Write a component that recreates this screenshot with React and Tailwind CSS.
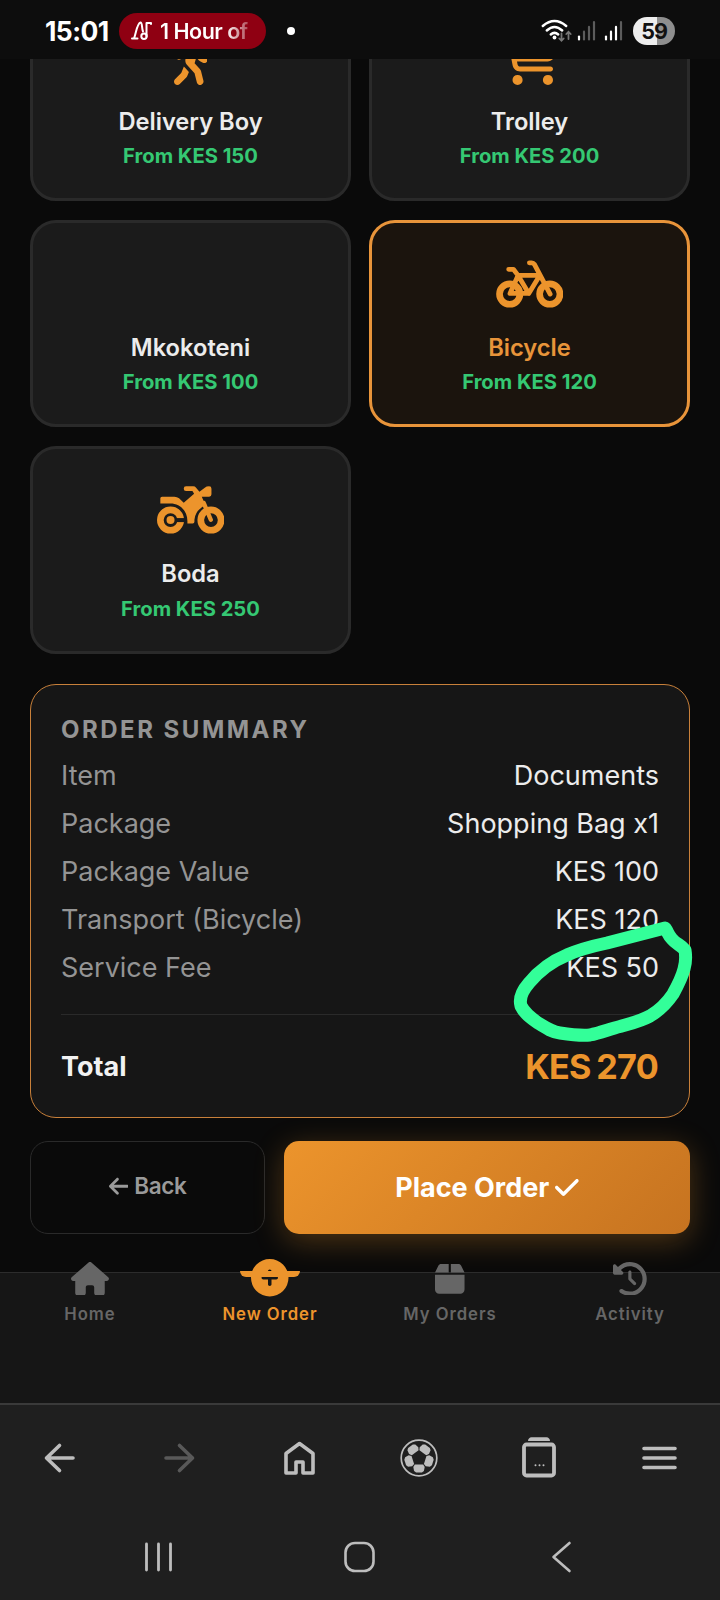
import React from 'react';
import {
    FaArrowLeft,
    FaBox,
    FaCartShopping,
    FaCheck,
    FaCirclePlus,
    FaClockRotateLeft,
    FaHouse,
    FaPersonWalking,
} from 'react-icons/fa6';

const BicycleIcon = ({ className }) => (
    <svg className={className} viewBox="0 0 202 162" fill="none" stroke="currentColor" strokeWidth="14.500" strokeLinecap="round" strokeLinejoin="round">
        <g transform="translate(0 10)">
            <circle cx="41" cy="101" r="30.500" strokeWidth="20" />
            <circle cx="161" cy="101" r="30.500" strokeWidth="20" />
            <path d="M38 27H52L66 45M124 45H66L42 99H98L66 45M98 99 128 50M100 7.500H107Q112 7.500 115 12L162 101" />
        </g>
    </svg>
);

const MotorcycleIcon = ({ className }) => (
    <svg className={className} viewBox="0 0 202 162" fill="none">
        <g transform="translate(0 10)">
            <circle cx="40.500" cy="101" r="30.500" stroke="currentColor" strokeWidth="20" />
            <path d="M50 101H86" stroke="#1b1b1b" strokeWidth="12" />
            <circle cx="40.500" cy="101" r="12" fill="currentColor" />
            <circle cx="161.500" cy="101" r="30.500" stroke="currentColor" strokeWidth="20" />
            <path d="M140 50 161 100" stroke="currentColor" strokeWidth="13" strokeLinecap="round" />
            <path
                fill="currentColor"
                d="M10 36Q10 31 15 31H52Q60 31 66 36L80 49 111 22 106 14H87Q80 14 80 7 80 0 87 0H108Q114 0 117 4L127 16 143 4Q148 0 156 0 163 0 163 7V24Q163 31 156 31H134L145 56Q114 72 112 100V106Q112 111 107 111H91V104C91 74 70 51 40 51H10Z"
            />
        </g>
    </svg>
);

// icon widths follow each glyph's own viewBox ratio
const TRANSPORTS = [
    { name: 'Delivery Boy', price: 150, icon: FaPersonWalking, iconWidth: 'w-[0.625em]' },
    { name: 'Trolley', price: 200, icon: FaCartShopping, iconWidth: 'w-[1.125em]' },
    { name: 'Mkokoteni', price: 100, icon: null },
    { name: 'Bicycle', price: 120, icon: BicycleIcon, iconWidth: 'w-[1.25em]' },
    { name: 'Boda', price: 250, icon: MotorcycleIcon, iconWidth: 'w-[1.25em]' },
];

const SUMMARY = [
    ['Item', 'Documents'],
    ['Package', 'Shopping Bag x1'],
    ['Package Value', 'KES 100'],
    ['Transport (Bicycle)', 'KES 120'],
    ['Service Fee', 'KES 50'],
];

const TABS = [
    { label: 'Home', icon: FaHouse, iconWidth: 'w-[1.125em]' },
    { label: 'New Order', icon: FaCirclePlus, iconWidth: 'w-[1em]' },
    { label: 'My Orders', icon: FaBox, iconWidth: 'w-[0.875em]' },
    { label: 'Activity', icon: FaClockRotateLeft, iconWidth: 'w-[1em]' },
];

const Signal = ({ level }) => (
    <svg width="20" height="22" viewBox="0 0 20 22" strokeWidth="2.2" strokeLinecap="round">
        {[0, 1, 2, 3].map((i) => (
            <path
                key={i}
                d={`M${2 + i * 5} 19.5V${16.5 - i * 4.8}`}
                stroke={i < level ? '#fff' : '#5c5c5c'}
            />
        ))}
    </svg>
);

const StatusBar = () => (
    <header className="relative z-10 flex h-[59px] shrink-0 items-center bg-[#0d0d0d] pt-[3px] pl-[45px] text-white">
        <span className="w-[66px] text-[26.5px] leading-none font-bold tracking-[-0.6px]">15:01</span>
        <div className="ml-2 flex h-9 w-[147px] items-center rounded-full bg-[#8f0012] pl-3">
            <svg width="22" height="20" viewBox="0 0 22 20" fill="none" stroke="#fff" strokeWidth="2" strokeLinecap="round" strokeLinejoin="round">
                <path d="M1 17.5h5.500M3 17.500C5 13 6 2 9.500 1.500C11.500 1.500 10.500 7 12 10.500M15.500 15.500V2h4.500v1" />
                <circle cx="13" cy="15.300" r="2.700" />
            </svg>
            <span className="ml-[7px] bg-linear-to-r from-white from-75% to-white/30 bg-clip-text text-[21.5px] leading-7 font-semibold tracking-[-0.500px] text-transparent">
                1 Hour of
            </span>
        </div>
        <span className="ml-[21px] size-2 rounded-full bg-white" />
        <div className="ml-auto flex items-center pr-[45px]">
            <svg width="32" height="24" viewBox="0 0 32 24" fill="none" strokeLinecap="round" overflow="visible">
                <g stroke="#fff" strokeWidth="2.5">
                    <path d="M.8 7Q12.500 -3 24.200 7" />
                    <path d="M4.800 11.500Q12.500 4.500 20.200 11.500" />
                    <path d="M8.800 15.500Q12.500 12.200 16.200 15.500" />
                </g>
                <circle cx="12.500" cy="18.500" r="1.900" fill="#fff" />
                <path d="M19.500 14.500v7M17.300 19.500l2.200 2.300 2.200-2.300M26.500 20v-7M24.300 15l2.200-2.300 2.200 2.300" stroke="#777" strokeWidth="1.800" />
            </svg>
            <div className="ml-[3px] flex gap-[7px]">
                <Signal level={1} />
                <Signal level={3} />
            </div>
            <span className="ml-[9px] flex h-7 w-[42px] items-center justify-center rounded-full bg-linear-to-r from-[#ededed] from-58% to-[#8e8e8e] to-58% text-[21.5px] font-bold tracking-[-1px] text-[#111]">
                59
            </span>
        </div>
    </header>
);

const TransportCard = ({ name, price, icon: Icon, iconWidth, selected }) => (
    <div
        className={`flex flex-col items-center rounded-[26px] border-3 pt-[33.600px] ${
            selected ? 'border-[#e8943a] bg-[#1b140d]' : 'border-[#2a2a2a] bg-[#1b1b1b]'
        }`}
    >
        <div className="h-[54px] text-[54px] text-[#ec942c]">{Icon && <Icon className={iconWidth} />}</div>
        <div className={`mt-[19px] text-[23.700px] leading-9 font-semibold ${selected ? 'text-[#e8943a]' : 'text-[#ececec]'}`}>
            {name}
        </div>
        <div className="mt-[1.600px] text-[20.200px] leading-[30px] font-bold text-[#35c873]">From KES {price}</div>
    </div>
);

const OrderSummary = () => (
    <section className="relative mt-[30.400px] h-[434px] rounded-[26px] border border-[#c8803a] bg-[#161616] px-[30px] pt-[30px]">
        <h2 className="mb-[7px] text-[24px] leading-[30px] font-bold tracking-[2.500px] text-[#949494]">ORDER SUMMARY</h2>
        {SUMMARY.map(([label, value]) => (
            <div key={label} className="flex h-12 items-center justify-between text-[27px]">
                <span className="text-[#949494]">{label}</span>
                <span className="text-[#ececec]">{value}</span>
            </div>
        ))}
        <div className="mt-[22px] flex h-[104px] items-center justify-between border-t border-[#2a2a2a] font-bold">
            <span className="pt-0.5 text-[27px] text-[#f2f2f2]">Total</span>
            <span className="pr-px text-[34.200px] tracking-[-0.700px] [word-spacing:-2px] text-[#ec942c]">KES 270</span>
        </div>
        {/* hand-drawn marker around the service fee */}
        <svg className="absolute top-[226px] left-[469px]" width="200" height="140" viewBox="500 911 200 140" fill="none">
            <path
                d="M665 928C645 933 627 938 607 943C593 946 580 949 567 955C550 962 538 972 529 983C522 991 519 999 521 1006C525 1014 531 1018 538 1023C546 1028 552 1032 560 1033C570 1034.500 580 1036 590 1035C600 1033 610 1029 620 1026.500C632 1023 641 1021 650 1016C660 1010 667 1003 673 994C678 985 682 977 684 969C686 962 686 956 685 950C681 945 676 944 672 939C668 935 668 932 665 928Z"
                stroke="#33ff99"
                strokeWidth="13"
                strokeLinejoin="round"
            />
        </svg>
    </section>
);

const Actions = () => (
    <div className="mt-[23px] flex h-[93px] gap-[19px]">
        <button className="flex w-[235px] items-center justify-center gap-1.5 rounded-[18px] border border-[#2a2a2a] pb-[3px] text-[22.500px] font-semibold tracking-[-0.400px] text-[#9a9a9a]">
            <FaArrowLeft className="w-[0.875em]" />
            Back
        </button>
        <button className="flex flex-1 items-center justify-center gap-1.5 rounded-[15px] bg-linear-135 from-[#ec942c] to-[#c67320] pt-px text-[27px] font-bold text-white shadow-[0_7px_30px_rgba(236,148,44,0.3)]">
            Place Order
            <FaCheck className="w-[0.875em]" />
        </button>
    </div>
);

const TabBar = () => (
    <nav className="relative z-10 flex h-[131px] shrink-0 border-t border-[#2c2c2c] bg-[#161616]">
        {TABS.map(({ label, icon: Icon, iconWidth }) => {
            const active = label === 'New Order';
            return (
                <div key={label} className={`relative flex flex-1 flex-col items-center ${active ? 'text-[#ec942c]' : 'text-[#666]'}`}>
                    {active && <span className="absolute -top-0.5 h-1.5 w-[60px] rounded-b-full bg-[#ec942c]" />}
                    <div className={`-mt-3.5 flex h-[38px] items-center ${active ? 'text-[37.500px]' : 'pt-px text-[33.750px]'}`}>
                        <Icon className={iconWidth} />
                    </div>
                    <span className="mt-[4.600px] text-[16.700px] leading-6 font-semibold tracking-[0.950px]">{label}</span>
                </div>
            );
        })}
    </nav>
);

const BROWSER_ICONS = [
    <path d="M33 20H6.500M19.500 7.500 6.500 20l13 12.500" />,
    <path stroke="#595959" d="M6 20h26.500M19.500 7.500 32.500 20l-13 12.500" />,
    <path d="M6 15.500 19.500 5.500l13.500 10V35H23V24h-7v11H6Z" />,
    <g stroke="none">
        <circle cx="20" cy="20" r="17.800" fill="none" stroke="#bdbdbd" strokeWidth="1.700" />
        {[0, 72, 144, 216, 288].map((deg) => (
            <path key={deg} transform={`rotate(${deg} 20 20)`} fill="#bdbdbd" d="M15.800 26.500h8.400l1.500 2.500-.8 4-2 1.500h-5.800l-2-1.500-.8-4Z" />
        ))}
    </g>,
    <g>
        <rect x="5" y="6.500" width="30" height="31" rx="2.500" strokeWidth="3.800" />
        <path d="M9 3c0-2 1.500-3.800 3.500-3.800h15c2 0 3.500 1.800 3.500 3.800Z" fill="#bdbdbd" stroke="none" />
        <path d="M16.500 27.300h.01M20.500 27.300h.01M24.500 27.300h.01" strokeWidth="2" />
    </g>,
    <path d="M5 10.500h31M5 20h31M5 29.500h31" />,
];

const BrowserBar = () => (
    <footer className="h-[197px] shrink-0 border-t-2 border-[#3a3a3a] bg-[#1f1f1f]">
        <div className="flex h-[105px] items-center pr-px">
            {BROWSER_ICONS.map((icon, i) => (
                <div key={i} className="flex flex-1 justify-center">
                    <svg width="40" height="40" viewBox="0 0 40 40" fill="none" stroke="#bdbdbd" strokeWidth="3.600" strokeLinecap="round" strokeLinejoin="round" overflow="visible">
                        {icon}
                    </svg>
                </div>
            ))}
        </div>
        <div className="flex justify-between px-[142px] pt-[30.500px]">
            <svg width="32" height="32" viewBox="0 0 32 32" stroke="#bdbdbd" strokeWidth="2.800" strokeLinecap="round">
                <path d="M4.500 3v26M16.500 3v26M28.500 3v26" />
            </svg>
            <svg width="32" height="32" viewBox="0 0 32 32" fill="none" stroke="#bdbdbd" strokeWidth="2.600">
                <rect x="1.500" y="2" width="28" height="28" rx="9.500" />
            </svg>
            <svg width="32" height="32" viewBox="0 0 32 32" fill="none" stroke="#bdbdbd" strokeWidth="2.600" strokeLinecap="round" strokeLinejoin="round">
                <path d="M23.500 2 7.500 16l16 14" />
            </svg>
        </div>
    </footer>
);

export default function App() {
    return (
        <div className="flex h-[1600px] w-[720px] flex-col overflow-hidden bg-[#0a0a0a] font-['Inter',sans-serif]">
            <StatusBar />
            <main className="h-[1213px] shrink-0 overflow-hidden px-[30px]">
                <div className="-mt-[65px] grid auto-rows-[207.200px] grid-cols-2 gap-x-[18px] gap-y-[19px]">
                    {TRANSPORTS.map((t) => (
                        <TransportCard key={t.name} {...t} selected={t.name === 'Bicycle'} />
                    ))}
                </div>
                <OrderSummary />
                <Actions />
            </main>
            <TabBar />
            <BrowserBar />
        </div>
    );
}
